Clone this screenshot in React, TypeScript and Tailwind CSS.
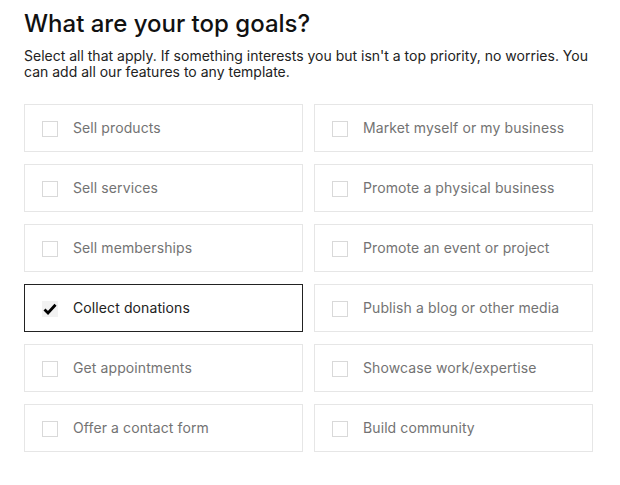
import React, { useState } from 'react';

const goals = [
  'Sell products',
  'Market myself or my business',
  'Sell services',
  'Promote a physical business',
  'Sell memberships',
  'Promote an event or project',
  'Collect donations',
  'Publish a blog or other media',
  'Get appointments',
  'Showcase work/expertise',
  'Offer a contact form',
  'Build community',
];

export default function App() {
  const [picked, setPicked] = useState<string[]>(['Collect donations']);

  const toggle = (g: string) =>
    setPicked((p) => (p.includes(g) ? p.filter((x) => x !== g) : [...p, g]));

  return (
    <div className="w-[620px] h-[485px] bg-white pl-6 pt-[9px] font-['Inter',sans-serif] text-[#111]">
      <h1 className="text-[24px] leading-[30px] font-medium">What are your top goals?</h1>
      <p className="mt-[9px] w-[576px] text-[14px] leading-[16px] text-[#222]">
        Select all that apply. If something interests you but isn't a top priority, no worries. You
        can add all our features to any template.
      </p>

      <div className="mt-[24px] grid grid-cols-[279px_279px] gap-x-[11px] gap-y-3">
        {goals.map((g) => {
          const on = picked.includes(g);
          return (
            <button
              key={g}
              onClick={() => toggle(g)}
              className={`h-12 flex items-center pl-[17px] pb-[2px] text-left border ${
                on ? 'border-[#222]' : 'border-[#e6e6e6]'
              }`}
            >
              <span
                className={`w-4 h-4 mt-[3px] flex items-center justify-center ${
                  on ? 'bg-[#f2f2f2]' : 'border border-[#d9d9d9]'
                }`}
              >
                {on && (
                  <svg width="14" height="12" viewBox="0 0 14 12">
                    <path d="M1.5 6.5 L5 10 L12.5 1.8" fill="none" stroke="#000" strokeWidth="2.8" />
                  </svg>
                )}
              </span>
              <span className={`ml-[15px] text-[14px] tracking-[0.1px] ${on ? 'text-[#222]' : 'text-[#737373]'}`}>{g}</span>
            </button>
          );
        })}
      </div>
    </div>
  );
}
